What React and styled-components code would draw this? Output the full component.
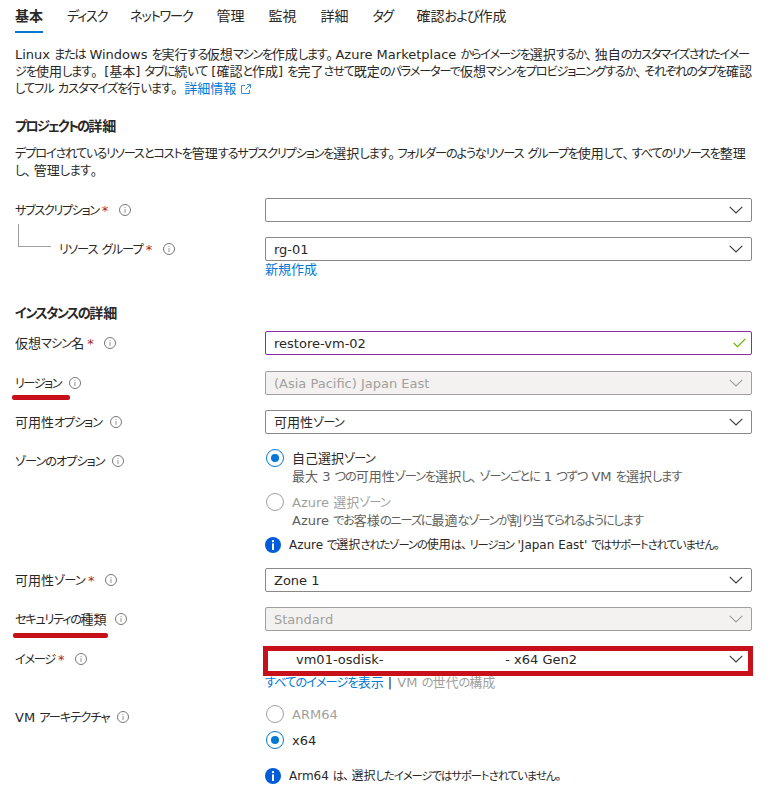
import React, { useState } from 'react'
import styled, { createGlobalStyle } from 'styled-components'

// CSS
const GlobalStyle = createGlobalStyle`
    * {
        box-sizing: border-box;
    }
    body {
        margin: 0;
        background-color: #ffffff;
        color: #292827;
        font-family: "DejaVu Sans", "Noto Sans CJK JP", sans-serif;
        font-size: 13px;
        line-height: 16px;
        font-feature-settings: "palt";
        overflow: hidden;
    }
`

const Page = styled.div`
    width: 772px;
    height: 793px;
    padding: 0 20px 0 15px;
    overflow: hidden;
`

const KanaRun = styled.span`
    font-size: 0.94em;
    letter-spacing: ${props => props.$spacing}px;
`

const Stop = styled.span`
    letter-spacing: 2.5px;
`

const TabBar = styled.div`
    display: flex;
    height: 33px;
`

const Tab = styled.button`
    height: 33px;
    margin: 0 ${props => props.$gap}px 0 0;
    padding: 1px 0 0;
    border: none;
    border-bottom: 2px solid ${props => props.$active ? '#0078d4' : 'transparent'};
    background: none;
    color: inherit;
    font: inherit;
    font-feature-settings: inherit;
    font-size: 14px;
    font-weight: ${props => props.$active ? 'bold' : 'normal'};
    white-space: nowrap;
    cursor: pointer;
`

const Paragraph = styled.p`
    margin: ${props => props.$top}px 0 0;
`

const TextLine = styled.span`
    display: flex;
    align-items: center;
    height: 17px;
    line-height: 17px;
    white-space: pre;
`

const Heading = styled.h3`
    margin: ${props => props.$top}px 0 0;
    height: 18px;
    line-height: 18px;
    font-size: 14px;
    font-weight: bold;
    white-space: nowrap;
`

const Link = styled.a`
    color: #0078d4;
    text-decoration: none;
    cursor: pointer;
`

const ExternalIcon = styled.svg`
    margin-left: 4px;
`

const Row = styled.div`
    position: relative;
    display: grid;
    grid-template-columns: 250px 487px;
    align-items: start;
    margin-top: ${props => props.$top}px;
`

const LabelBox = styled.div`
    position: relative;
    display: flex;
    align-items: center;
    height: 24px;
    padding-left: ${props => props.$indent || 0}px;
    white-space: nowrap;
    & > span {
        padding-top: 2px;
    }
`

const Star = styled.span`
    width: 6px;
    margin-left: 3px;
    margin-right: 3px;
    color: #a4262c;
`

const InfoIcon = styled.svg`
    margin-left: 8px;
    flex: none;
`

const Branch = styled.div`
    position: absolute;
    left: 3px;
    top: -13px;
    width: 33px;
    height: 23px;
    border-left: 1px solid #a19f9d;
    border-bottom: 1px solid #a19f9d;
`

const RedLine = styled.div`
    position: absolute;
    left: ${props => props.$left}px;
    top: ${props => props.$top}px;
    width: ${props => props.$width}px;
    height: 5px;
    border-radius: 2px;
    background-color: #c8101b;
`

const RedFrame = styled.div`
    position: absolute;
    left: 248px;
    top: -1px;
    width: 490px;
    height: 30px;
    border: 5px solid #c8101b;
`

const Field = styled.div`
    display: flex;
    align-items: center;
    justify-content: space-between;
    height: 24px;
    padding: 0 ${props => props.$valid ? 5 : 8}px 0 8px;
    border: 1px solid ${props => props.$valid ? '#8a2da5' : props.$disabled ? '#a19f9d' : '#8a8886'};
    border-color: ${props => props.$plain && 'transparent'};
    border-radius: 2px;
    background-color: ${props => props.$disabled ? '#f3f2f1' : '#ffffff'};
    color: ${props => props.$disabled ? '#a19f9d' : '#292827'};
    white-space: nowrap;
    & > span {
        padding-top: 2px;
    }
`

const ImageValue = styled.span`
    display: flex;
    justify-content: space-between;
    width: 303px;
    padding-left: 22px;
`

const SubLinks = styled.div`
    height: 18px;
    margin-top: ${props => props.$top || 0}px;
    line-height: 18px;
    white-space: pre;
`

const Muted = styled.span`
    margin-left: 1px;
    color: #a19f9d;
`

const RadioLine = styled.label`
    display: flex;
    align-items: center;
    height: 20px;
    margin-top: ${props => props.$top || 0}px;
    padding-left: 1px;
    color: ${props => props.$disabled ? '#a19f9d' : '#292827'};
    white-space: nowrap;
    & > span:last-child {
        padding-top: 2px;
    }
`

const RadioDot = styled.span`
    display: flex;
    align-items: center;
    justify-content: center;
    width: 18px;
    height: 18px;
    margin-right: 8px;
    border: 1px solid ${props => props.$checked ? '#0078d4' : '#a19f9d'};
    border-radius: 50%;
    &::after {
        content: '';
        width: 8px;
        height: 8px;
        border-radius: 50%;
        background-color: ${props => props.$checked ? '#0078d4' : 'transparent'};
    }
`

const RadioNote = styled.div`
    height: 16px;
    padding-left: 27px;
    line-height: 17px;
    color: #605e5c;
    white-space: nowrap;
`

const Notice = styled.div`
    display: flex;
    align-items: center;
    gap: 8px;
    height: 16px;
    margin-top: ${props => props.$top}px;
    font-size: 12px;
    white-space: nowrap;
`

// Sets kana tighter than the kanji and latin text around it,
// and leaves some room after commas and full stops
function Jp({ text, k }) {
    return text.split(/([\u3003-\u30ff]+|[、。])/).map((part, i) => {
        if (i % 2 === 0) return part
        if (/[、。]/.test(part)) return <Stop key={i}>{part}</Stop>
        return <KanaRun key={i} $spacing={k}>{part}</KanaRun>
    })
}

function Info() {
    return (
        <InfoIcon width="12" height="12" viewBox="0 0 12 12" fill="none">
            <circle cx="6" cy="6" r="5.5" stroke="#797775" />
            <path d="M6 5v4M6 3v1" stroke="#979593" />
        </InfoIcon>
    )
}

function Chevron({ disabled }) {
    return (
        <svg width="14" height="8" viewBox="0 0 14 8" fill="none">
            <path d="M0.7 0.8L7 7L13.3 0.8" stroke={disabled ? '#a19f9d' : '#3b3a39'} strokeWidth="1.1" />
        </svg>
    )
}

function Check() {
    return (
        <svg width="13" height="10" viewBox="0 0 13 10" fill="none">
            <path d="M0.7 5L4.5 8.6L12.3 0.9" stroke="#6bb700" strokeWidth="1.3" />
        </svg>
    )
}

function External() {
    return (
        <ExternalIcon width="12" height="12" viewBox="0 0 12 12" fill="none" stroke="#3a8fd9">
            <path d="M5 2.5H1.5V10.5H9.5V7M7 1.5H10.5V5M10.5 1.5L5.5 6.5" />
        </ExternalIcon>
    )
}

function Label({ text, k, required, indent, children }) {
    return (
        <LabelBox $indent={indent}>
            <span><Jp text={text} k={k} /></span>
            {required && <Star>*</Star>}
            <Info />
            {children}
        </LabelBox>
    )
}

function Select({ disabled, plain, children }) {
    return (
        <Field $disabled={disabled} $plain={plain}>
            <span>{children}</span>
            <Chevron disabled={disabled} />
        </Field>
    )
}

function Message({ top, text, k }) {
    return (
        <Notice $top={top}>
            <svg width="16" height="16" viewBox="0 0 16 16">
                <circle cx="8" cy="8" r="8" fill="#015cda" />
                <rect x="7" y="6.4" width="2" height="6.6" fill="#ffffff" />
                <circle cx="8" cy="4.1" r="1.2" fill="#ffffff" />
            </svg>
            <span><Jp text={text} k={k} /></span>
        </Notice>
    )
}

const tabs = [
    { text: '基本', k: 0, gap: 24 },
    { text: 'ディスク', k: -1.28, gap: 23 },
    { text: 'ネットワーク', k: -1.2, gap: 24 },
    { text: '管理', k: 0, gap: 24 },
    { text: '監視', k: 0, gap: 24 },
    { text: '詳細', k: 0, gap: 24 },
    { text: 'タグ', k: -1.7, gap: 24 },
    { text: '確認および作成', k: -0.9, gap: 0 },
]

function App() {

    // State
    const [activeTab, setActiveTab] = useState('基本')

    return (
        <Page>
            <GlobalStyle />
            <TabBar>
                {tabs.map(tab => (
                    <Tab
                        key={tab.text}
                        $gap={tab.gap}
                        $active={tab.text === activeTab}
                        onClick={() => setActiveTab(tab.text)}
                    >
                        <Jp text={tab.text} k={tab.k} />
                    </Tab>
                ))}
            </TabBar>

            <Paragraph $top={13}>
                <TextLine><span><Jp k={-1.35} text="Linux または Windows を実行する仮想マシンを作成します。Azure Marketplace からイメージを選択するか、独自のカスタマイズされたイメー" /></span></TextLine>
                <TextLine><span><Jp k={-1.17} text="ジを使用します。 [基本] タブに続いて [確認と作成] を完了させて既定のパラメーターで仮想マシンをプロビジョニングするか、それぞれのタブを確認" /></span></TextLine>
                <TextLine>
                    <span><Jp k={-1.05} text="してフル カスタマイズを行います。 " /></span>
                    <Link>詳細情報</Link>
                    <External />
                </TextLine>
            </Paragraph>

            <Heading $top={20}><Jp text="プロジェクトの詳細" k={-1.8} /></Heading>
            <Paragraph $top={10}>
                <TextLine><span><Jp k={-1.2} text="デプロイされているリソースとコストを管理するサブスクリプションを選択します。フォルダーのようなリソース グループを使用して、すべてのリソースを整理" /></span></TextLine>
                <TextLine><span><Jp k={-0.6} text="し、管理します。" /></span></TextLine>
            </Paragraph>

            <Row $top={19}>
                <Label text="サブスクリプション" k={-1.45} required />
                <Select />
            </Row>
            <Row $top={15}>
                <Label text="リソース グループ" k={-1} required indent={44}>
                    <Branch />
                </Label>
                <div>
                    <Select>rg-01</Select>
                    <SubLinks><Link>新規作成</Link></SubLinks>
                </div>
            </Row>

            <Heading $top={25}><Jp text="インスタンスの詳細" k={-1.55} /></Heading>
            <Row $top={9}>
                <Label text="仮想マシン名" k={-1} required />
                <Field $valid>
                    <span>restore-vm-02</span>
                    <Check />
                </Field>
            </Row>
            <Row $top={16}>
                <Label text="リージョン" k={-1.55}>
                    <RedLine $left={-3} $top={24} $width={58} />
                </Label>
                <Select disabled>(Asia Pacific) Japan East</Select>
            </Row>
            <Row $top={15}>
                <Label text="可用性オプション" k={-1.2} />
                <Select><Jp text="可用性ゾーン" k={-0.83} /></Select>
            </Row>
            <Row $top={15}>
                <Label text="ゾーンのオプション" k={-1.05} />
                <div>
                    <RadioLine $top={-1}>
                        <RadioDot $checked />
                        <span><Jp text="自己選択ゾーン" k={-0.8} /></span>
                    </RadioLine>
                    <RadioNote><Jp text="最大 3 つの可用性ゾーンを選択し、ゾーンごとに 1 つずつ VM を選択します" k={-1.07} /></RadioNote>
                    <RadioLine $disabled $top={8}>
                        <RadioDot />
                        <span><Jp text="Azure 選択ゾーン" k={-0.87} /></span>
                    </RadioLine>
                    <RadioNote><Jp text="Azure でお客様のニーズに最適なゾーンが割り当てられるようにします" k={-1.17} /></RadioNote>
                    <Message top={9} text="Azure で選択されたゾーンの使用は、リージョン 'Japan East' ではサポートされていません。" k={-1.05} />
                </div>
            </Row>
            <Row $top={15}>
                <Label text="可用性ゾーン" k={-0.83} required />
                <Select>Zone 1</Select>
            </Row>
            <Row $top={15}>
                <Label text="セキュリティの種類" k={-1.35}>
                    <RedLine $left={-2} $top={26} $width={95} />
                </Label>
                <Select disabled>Standard</Select>
            </Row>
            <Row $top={16}>
                <Label text="イメージ" k={-1.3} required />
                <div>
                    <Select plain>
                        <ImageValue>
                            <span>vm01-osdisk-</span>
                            <span>- x64 Gen2</span>
                        </ImageValue>
                    </Select>
                    <SubLinks $top={3}>
                        <Link><Jp text="すべてのイメージを表示" k={-1} /></Link>
                        {' | '}
                        <Muted><Jp text="VM の世代の構成" k={-1} /></Muted>
                    </SubLinks>
                </div>
                <RedFrame />
            </Row>
            <Row $top={13}>
                <Label text="VM アーキテクチャ" k={-1} />
                <div>
                    <RadioLine $disabled $top={-1}>
                        <RadioDot />
                        <span>ARM64</span>
                    </RadioLine>
                    <RadioLine $top={6}>
                        <RadioDot $checked />
                        <span>x64</span>
                    </RadioLine>
                    <Message top={18} text="Arm64 は、選択したイメージではサポートされていません。" k={-0.97} />
                </div>
            </Row>
        </Page>
    )
}

export default App
